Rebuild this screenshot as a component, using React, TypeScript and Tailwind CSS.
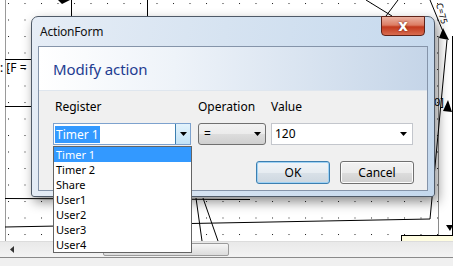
import React from "react";

function Arrow({ className = "" }: { className?: string }) {
  return (
    <svg width="7" height="4" viewBox="0 0 7 4" className={className}>
      <polygon points="0,0 7,0 3.5,4" fill="#000" />
    </svg>
  );
}

function Canvas() {
  return (
    <svg width="453" height="241" className="absolute left-0 top-0">
      <defs>
        <pattern id="dots" x="8" y="3" width="16.5" height="16.5" patternUnits="userSpaceOnUse">
          <rect x="0" y="0" width="1" height="1" fill="#222" />
        </pattern>
      </defs>
      <rect x="0" y="0" width="453" height="241" fill="url(#dots)" />
      <line x1="5.5" y1="0" x2="5.5" y2="241" stroke="#9a9a9a" />
      <line x1="71.5" y1="0" x2="71.5" y2="60" stroke="#000" />
      <line x1="147.5" y1="0" x2="147.5" y2="60" stroke="#000" />
      <polygon points="58,0 70,0 62,4" fill="#000" />
      <line x1="5" y1="59.5" x2="40" y2="59.5" stroke="#000" />
      <text x="0" y="72" fontSize="12" fontFamily="Noto Sans, sans-serif" fill="#000">: [F =</text>
      <line x1="5" y1="106.5" x2="40" y2="106.5" stroke="#000" />
      <line x1="5" y1="198.5" x2="250" y2="199.5" stroke="#000" />
      <line x1="5" y1="227" x2="430" y2="219" stroke="#000" />
      <line x1="196" y1="198" x2="202" y2="241" stroke="#000" />
      <line x1="203" y1="198" x2="218" y2="241" stroke="#000" />
      <line x1="366" y1="0" x2="392" y2="16" stroke="#000" />
      <line x1="398" y1="0" x2="386" y2="16" stroke="#000" />
      <line x1="438.5" y1="36" x2="438.5" y2="241" stroke="#8a8a8a" />
      <line x1="452.5" y1="36" x2="452.5" y2="241" stroke="#000" />
      <line x1="447" y1="40" x2="430" y2="219" stroke="#000" />
      <line x1="430" y1="0" x2="444" y2="34" stroke="#000" />
      <polygon points="443,28 449,40 439,38" fill="#000" />
      <polygon points="448,100 452,112 443,111" fill="#000" />
      <text x="0" y="0" fontSize="9" fontFamily="Noto Sans, sans-serif" fill="#000" transform="translate(436 4) rotate(75)">C=75</text>
      <text x="434" y="106" fontSize="11" fontFamily="Noto Sans, sans-serif" fill="#000">0]</text>
      <rect x="401.5" y="235.5" width="60" height="10" fill="#fffde1" stroke="#000" />
      <polygon points="446,225 453,225 450,231" fill="#000" />
    </svg>
  );
}

export default function App() {
  const items = ["Timer 1", "Timer 2", "Share", "User1", "User2", "User3", "User4"];
  return (
    <div className="relative w-[453px] h-[266px] overflow-hidden bg-white flex flex-col font-['Noto_Sans',sans-serif] text-[12px] text-black">
      <div className="relative h-[241px] shrink-0">
        <Canvas />
      </div>
      {/* scrollbar */}
      <div className="h-[16px] shrink-0 flex items-stretch bg-[linear-gradient(#e9e9e9,#f3f3f3)] border-t border-[#dcdcdc]">
        <div className="w-[18px] flex items-center justify-end pr-[4px]">
          <svg width="4" height="7" viewBox="0 0 4 7"><polygon points="4,0 4,7 0,3.5" fill="#333" /></svg>
        </div>
        <div className="ml-[85px] mt-[1px] mb-[1px] w-[126px] rounded-[2px] border border-[#9b9b9b] bg-[linear-gradient(#f6f6f6,#dcdcdc)]" />
      </div>
      <div className="flex-1 border-t border-[#8a8a8a] bg-[#f0f0f0]" />

      {/* dialog window */}
      <div className="absolute left-[31px] top-[16px] w-[404px] h-[181px] rounded-t-[7px] rounded-b-[3px] border border-[#4f5a68] bg-[linear-gradient(100deg,#e6edf6_0%,#d6e3f1_45%,#c4d8ed_100%)] shadow-[3px_5px_12px_rgba(0,0,0,0.45)] flex flex-col">
        <div className="h-[29px] shrink-0 flex items-start">
          <span className="pl-[8px] pt-[7px] leading-[16px] tracking-[-0.2px] text-[#111]">ActionForm</span>
          <div className="ml-auto mr-[9px] -mt-[1px] w-[44px] h-[20px] rounded-b-[4px] border border-[#5e2218] bg-[linear-gradient(#eab2a2_0%,#dc7c63_45%,#c2391d_55%,#d86c50_100%)] flex items-center justify-center">
            <span className="text-white font-bold text-[15px] leading-[14px] font-['DejaVu_Sans',sans-serif] [text-shadow:0_0_2px_#5a1a10]">x</span>
          </div>
        </div>
        <div className="mx-[6px] mb-[5px] flex-1 border border-[#8594a9] flex flex-col bg-[#f0f0f0]">
          <div className="h-[44px] shrink-0 flex items-center pl-[14px] bg-[linear-gradient(90deg,#ffffff_0%,#eef3f9_35%,#c5d5e8_100%)] border-b border-[#dfe6ee]">
            <span className="text-[15px] leading-[20px] text-[#1e3c91] tracking-[-0.1px]">Modify action</span>
          </div>
          <div className="flex-1 flex flex-col pl-[14px] pr-[13px] pt-[8px]">
            <div className="flex">
              <div className="w-[138px] mr-[7px] flex flex-col gap-[8px]">
                <span className="pl-[2px] leading-[16px]">Register</span>
                <div className="h-[22px] flex border border-[#7da2ce] bg-white">
                  <div className="flex-1 flex items-center pl-[1px]">
                    <span className="bg-[#3399ff] text-white leading-[17px] px-[1px]">Timer 1</span>
                  </div>
                  <div className="w-[15px] flex items-center justify-center border-l border-[#3c7fb1] bg-[linear-gradient(#e3f3fc,#c2e2f6)]">
                    <Arrow />
                  </div>
                </div>
              </div>
              <div className="w-[68px] mr-[5px] flex flex-col gap-[8px]">
                <span className="leading-[16px]">Operation</span>
                <div className="h-[22px] flex items-center justify-between pl-[5px] pr-[4px] rounded-[3px] border border-[#707070] bg-[linear-gradient(#f2f2f2_0%,#ebebeb_50%,#dddddd_51%,#cfcfcf_100%)]">
                  <span className="leading-[16px]">=</span>
                  <Arrow />
                </div>
              </div>
              <div className="w-[142px] flex flex-col gap-[8px]">
                <span className="leading-[16px]">Value</span>
                <div className="h-[22px] flex items-center justify-between pl-[3px] pr-[5px] border border-[#c3c6cc] bg-white">
                  <span className="leading-[16px]">120</span>
                  <Arrow />
                </div>
              </div>
            </div>
            <div className="mt-[16px] flex justify-end gap-[10px]">
              <div className="w-[74px] h-[23px] rounded-[3px] border border-[#3c7fb1] bg-[linear-gradient(#f0f4f8_0%,#e6ecf1_50%,#d9e1e8_51%,#cdd7e0_100%)] flex items-center justify-center shadow-[inset_0_0_0_1px_#9fd2f4]">
                <span className="leading-[16px]">OK</span>
              </div>
              <div className="w-[74px] h-[23px] rounded-[3px] border border-[#707070] bg-[linear-gradient(#f2f2f2_0%,#ebebeb_50%,#dddddd_51%,#cfcfcf_100%)] flex items-center justify-center shadow-[inset_0_0_0_1px_#fcfcfc]">
                <span className="leading-[16px]">Cancel</span>
              </div>
            </div>
          </div>
        </div>
      </div>

      {/* dropdown list */}
      <div className="absolute left-[53px] top-[146px] w-[139px] h-[107px] border border-[#646464] bg-white flex flex-col">
        {items.map((it, i) => (
          <div
            key={it}
            className={
              i === 0
                ? "h-[15px] leading-[15px] text-[11px] pl-[2px] bg-[#3399ff] text-white"
                : "h-[15px] leading-[15px] text-[11px] pl-[2px] text-black"
            }
          >
            {it}
          </div>
        ))}
      </div>
    </div>
  );
}
